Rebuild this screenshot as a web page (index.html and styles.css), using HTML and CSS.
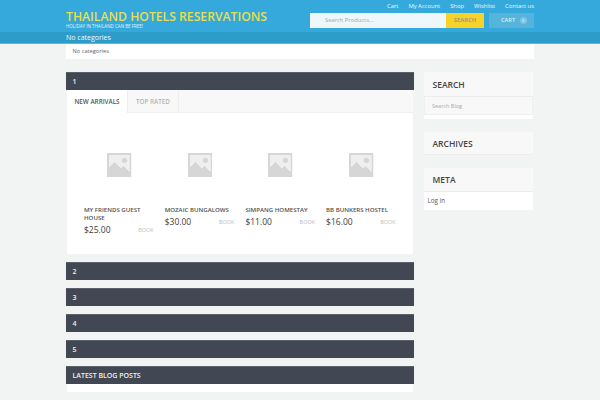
FILE: index.html
```html
<!DOCTYPE html>
<html lang="en">
<head>
<meta charset="utf-8">
<title>Thailand Hotels Reservations</title>
<link rel="stylesheet" href="styles.css">
</head>
<body>
<svg class="defs" width="0" height="0" aria-hidden="true">
  <symbol id="ph" viewBox="0 0 26 26">
    <path fill="#d6d6d6" fill-rule="evenodd" d="M0 0h26v26H0zM2.2 2.2v12.6L8 9l6.6 7 3.2-2.6 6 6.4V2.2z"/>
    <path fill="#efefef" d="M2.200 2.200h21.600v17.600l-6-6.400-3.200 2.600L8 9l-5.800 5.800z"/>
    <circle cx="18.500" cy="7.800" r="2.800" fill="#d6d6d6"/>
  </symbol>
</svg>
<header class="header">
  <div class="wrap top">
    <div class="brand">
      <div class="title">THAILAND HOTELS RESERVATIONS</div>
      <div class="tagline">HOLIDAY IN THAILAND CAN BE FREE!</div>
    </div>
    <div class="tools">
      <nav class="links"><a>Cart</a><a>My Account</a><a>Shop</a><a>Wishlist</a><a>Contact us</a></nav>
      <div class="actions">
        <div class="search"><span class="search-text">Search Products...</span><span class="search-btn">SEARCH</span></div>
        <div class="cart">CART <span class="count">0</span></div>
      </div>
    </div>
  </div>
  <div class="catbar"><div class="wrap">No categories</div></div>
</header>
<div class="wrap catdrop">No categories</div>
<div class="wrap layout">
  <main class="main">
    <section class="bar">1</section>
    <div class="panel">
      <div class="tabs"><span class="tab active">NEW ARRIVALS</span><span class="tab">TOP RATED</span></div>
      <div class="products">
        <article class="product">
          <svg class="thumb"><use href="#ph"/></svg>
          <h3>MY FRIENDS GUEST HOUSE</h3>
          <div class="buy"><span class="price">$25.00</span><span class="book">BOOK</span></div>
        </article>
        <article class="product">
          <svg class="thumb"><use href="#ph"/></svg>
          <h3>MOZAIC BUNGALOWS</h3>
          <div class="buy"><span class="price">$30.00</span><span class="book">BOOK</span></div>
        </article>
        <article class="product">
          <svg class="thumb"><use href="#ph"/></svg>
          <h3>SIMPANG HOMESTAY</h3>
          <div class="buy"><span class="price">$11.00</span><span class="book">BOOK</span></div>
        </article>
        <article class="product">
          <svg class="thumb"><use href="#ph"/></svg>
          <h3>BB BUNKERS HOSTEL</h3>
          <div class="buy"><span class="price">$16.00</span><span class="book">BOOK</span></div>
        </article>
      </div>
    </div>
    <section class="bar spaced">2</section>
    <section class="bar spaced">3</section>
    <section class="bar spaced">4</section>
    <section class="bar spaced">5</section>
    <section class="bar spaced">LATEST BLOG POSTS</section>
    <div class="blog"></div>
  </main>
  <aside class="side">
    <div class="widget">
      <h4>SEARCH</h4>
      <div class="blogsearch">Search Blog</div>
      <div class="pad"></div>
    </div>
    <div class="widget"><h4 class="short">ARCHIVES</h4></div>
    <div class="widget">
      <h4 class="mid">META</h4>
      <div class="meta">Log in</div>
    </div>
  </aside>
</div>
</body>
</html>
```
FILE: styles.css
```css
* { box-sizing: border-box; }
html, body { margin: 0; padding: 0; }
body {
  height: 400px;
  overflow: hidden;
  background: #f2f3f3;
  font-family: "Open Sans", sans-serif;
  color: #444;
}
.defs { position: absolute; }
.wrap { width: 468px; margin-left: 66px; }

.header { background: #35a9db; height: 44px; border-bottom: 1px solid #5db9dd; }
.top { display: flex; justify-content: space-between; height: 32px; }
.title { font-size: 12.200px; font-weight: 600; line-height: 14px; padding-top: 10px; height: 24px; color: #e8de4e; white-space: nowrap; }
.tagline { font-size: 4.500px; line-height: 4px; color: #e4f3fa; white-space: nowrap; }
.tools { width: 224px; }
.links { display: flex; justify-content: flex-end; gap: 10px; height: 13px; font-size: 5.850px; line-height: 12px; color: #eef8fc; }
.actions { display: flex; gap: 5px; height: 15px; }
.search { display: flex; width: 174px; background: #eef7fb; font-size: 5.800px; line-height: 15px; color: #9aa6ab; }
.search-text { flex: 1; padding-left: 15px; }
.search-btn { width: 38px; background: #f7d32a; color: #a3a26a; font-weight: 700; text-align: center; }
.cart { flex: 1; background: #56b3dc; color: #d9eff8; font-size: 5.700px; font-weight: 600; line-height: 15px; padding-left: 12px; }
.count { display: inline-block; width: 7px; height: 7px; margin-left: 3px; border-radius: 50%; background: #7cc5e5; font-size: 4px; line-height: 7px; text-align: center; }
.catbar { background: #2e9cc8; height: 11px; font-size: 7px; line-height: 11px; color: #f1f9fc; }
.catdrop { background: #fff; height: 15px; padding-left: 6.500px; font-size: 5.700px; line-height: 14px; color: #666; }

.layout { display: flex; gap: 10px; margin-top: 13px; align-items: flex-start; }
.main { width: 348px; }
.bar { height: 17.500px; background: #424853; border-top: 1px solid #5c6169; color: #eef0f1; font-size: 7px; font-weight: 600; line-height: 17px; padding-left: 6.500px; }
.spaced { margin-top: 8.500px; }
.panel { margin: 0 1px; background: #fff; height: 164px; }
.tabs { display: flex; height: 23px; background: #f8f8f8; border-bottom: 1px solid #f0f0f0; }
.tab { width: 51px; font-size: 6.300px; font-weight: 600; line-height: 24px; color: #b4b4b4; text-align: center; border-right: 1px solid #eeeeee; white-space: nowrap; }
.tab.active { width: 61px; height: 23px; background: #fff; color: #555; }
.products { display: grid; grid-template-columns: repeat(4, 80.700px); padding: 40px 0 0 17px; }
.product { padding-right: 13px; }
.thumb { display: block; width: 24.500px; height: 24.500px; margin: 0 0 0 23px; }
.product h3 { margin: 29px 0 0; font-size: 6.100px; font-weight: 600; line-height: 8px; color: #505050; }
.buy { display: flex; justify-content: space-between; align-items: center; padding-top: 2px; height: 13px; margin-right: -13px; padding-right: 11px; }
.price { font-size: 8.500px; color: #3c3c3c; }
.book { font-size: 5.500px; color: #bcbcbc; }
.blog { margin: 0 1px; height: 8px; background: #fff; }

.side { width: 109px; }
.widget { background: #fff; margin-bottom: 13px; }
.widget h4 { margin: 0; height: 25px; background: #f8f8f8; border-bottom: 1px solid #ececec; font-size: 8.500px; font-weight: 600; line-height: 25px; padding-left: 8.500px; color: #444; }
.widget h4.short { height: 23px; line-height: 23px; }
.widget h4.mid { height: 24px; line-height: 23px; }
.blogsearch { height: 18px; background: #f8f8f8; border: 1px solid #efefef; border-top: 0; padding-left: 7px; font-size: 5.500px; line-height: 18px; color: #a8a8a8; }
.pad { height: 4px; }
.meta { height: 18px; padding-left: 3.500px; font-size: 6.300px; line-height: 18px; color: #555; }
```
